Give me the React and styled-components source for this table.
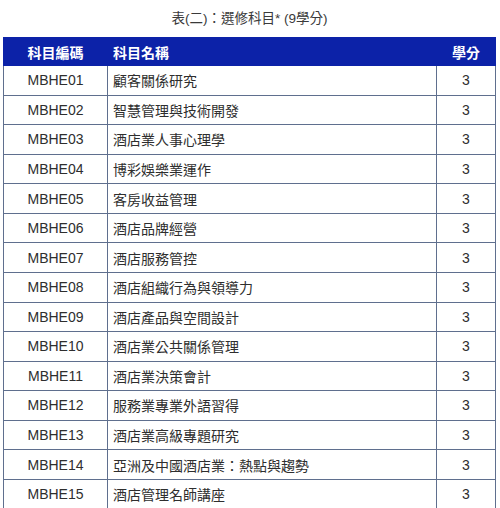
import React from "react";
import styled, { createGlobalStyle } from "styled-components";

const Global = createGlobalStyle`
  html, body { margin: 0; padding: 0; background: #fff; }
  body { font-family: "Liberation Sans", Arial, "Noto Sans CJK TC", sans-serif; color: #333; }
`;

const Page = styled.div`
  padding: 0 4px 0 3px;
`;

const Title = styled.div`
  height: 37px;
  display: flex;
  align-items: center;
  justify-content: center;
  font-size: 13.5px;
  color: #3a3a3a;
  padding-bottom: 4px;
  box-sizing: border-box;
`;

const Table = styled.table`
  width: 100%;
  border-collapse: collapse;
  font-size: 14px;
  table-layout: fixed;
`;

const Th = styled.th`
  background: #0c22a8;
  color: #fff;
  font-weight: bold;
  height: 27px;
  padding: 0 5px;
  text-align: ${(p) => p.$align || "center"};
  border: 1px solid #0c22a8;
`;

const Td = styled.td`
  height: 28.57px;
  padding: 0 5px;
  border: 1px solid #5f6f8e;
  color: #2e2e2e;
  text-align: ${(p) => p.$align || "center"};
  white-space: nowrap;
`;

const rows = [
  ["MBHE01", "顧客關係研究"],
  ["MBHE02", "智慧管理與技術開發"],
  ["MBHE03", "酒店業人事心理學"],
  ["MBHE04", "博彩娛樂業運作"],
  ["MBHE05", "客房收益管理"],
  ["MBHE06", "酒店品牌經營"],
  ["MBHE07", "酒店服務管控"],
  ["MBHE08", "酒店組織行為與領導力"],
  ["MBHE09", "酒店產品與空間設計"],
  ["MBHE10", "酒店業公共關係管理"],
  ["MBHE11", "酒店業決策會計"],
  ["MBHE12", "服務業專業外語習得"],
  ["MBHE13", "酒店業高級專題研究"],
  ["MBHE14", "亞洲及中國酒店業：熱點與趨勢"],
  ["MBHE15", "酒店管理名師講座"],
];

export default function App() {
  return (
    <Page>
      <Global />
      <Title>表(二)：選修科目* (9學分)</Title>
      <Table>
        <colgroup>
          <col style={{ width: "104px" }} />
          <col />
          <col style={{ width: "59px" }} />
        </colgroup>
        <thead>
          <tr>
            <Th>科目編碼</Th>
            <Th $align="left">科目名稱</Th>
            <Th>學分</Th>
          </tr>
        </thead>
        <tbody>
          {rows.map(([code, name]) => (
            <tr key={code}>
              <Td>{code}</Td>
              <Td $align="left">{name}</Td>
              <Td>3</Td>
            </tr>
          ))}
        </tbody>
      </Table>
    </Page>
  );
}
